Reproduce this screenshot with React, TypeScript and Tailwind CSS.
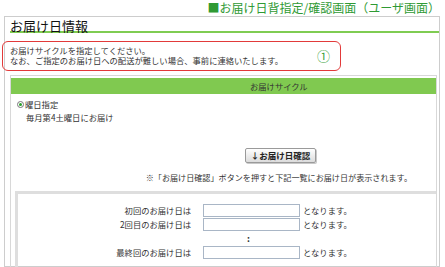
export default function App() {
  const rows = [
    { label: "初回のお届け日は" },
    { label: "2回目のお届け日は" },
  ];

  return (
    <div
      className="relative w-[445px] h-[267px] overflow-hidden bg-white text-[#333]"
      style={{ fontFamily: '"Noto Sans CJK JP", "Noto Sans", sans-serif' }}
    >
      {/* page caption */}
      <div className="h-[16px] pr-[5px] text-right text-[12px] leading-[16px] text-[#2f9a34]">
        ■お届け日背指定/確認画面（ユーザ画面）
      </div>

      {/* main panel */}
      <div className="ml-[4px] w-[436px] h-[251px] border border-[#cdcdcd] flex flex-col">
        <div className="ml-[5px] h-[16px] border-b-2 border-[#7fcc52] pt-[1px] text-[13px] leading-[15px] font-normal text-[#111]">
          お届け日情報
        </div>

        <div className="ml-[5px] mt-[12px] text-[8.3px] leading-[10px]">
          <p>お届けサイクルを指定してください。</p>
          <p>なお、ご指定のお届け日への配送が難しい場合、事前に連絡いたします。</p>
        </div>

        <div className="ml-[5px] mr-[2px] mt-[10px] border border-[#d8d8d8] px-0 pt-[2px] pb-[1px] flex flex-col">
          <div className="h-[16px] bg-[#80c950] pl-[239px] text-[8.3px] leading-[16px] text-[#333]">
            お届けサイクル
          </div>

          <div className="mt-[4px] h-[12px] pl-[6px] flex items-center gap-[1px] text-[8.3px]">
            <span className="w-[7px] h-[7px] rounded-full border border-[#777] bg-white flex items-center justify-center">
              <span className="w-[3px] h-[3px] rounded-full bg-[#2aa02a]" />
            </span>
            <span className="leading-[12px]">曜日指定</span>
          </div>
          <div className="mt-[1px] h-[12px] pl-[15px] text-[8.3px] leading-[12px]">
            毎月第4土曜日にお届け
          </div>

          <div className="mt-[17px] ml-[234px]">
            <button className="w-[71px] h-[15px] rounded-[2px] border border-[#9a9a9a] bg-gradient-to-b from-white to-[#dcdcdc] text-[8.5px] leading-[13px] font-bold text-[#222] shadow-[1px_1px_0_#c8c8c8]">
              ↓お届け日確認
            </button>
          </div>

          <div className="mt-[8px] h-[12px] pr-[24px] text-right text-[8.1px] leading-[12px]">
            ※「お届け日確認」ボタンを押すと下記一覧にお届け日が表示されます。
          </div>

          <div className="mt-[7px] ml-[4px] border-[3px] border-r-0 border-[#dedede] pt-[10px] pb-[10px] flex flex-col gap-[1px] text-[8.3px]">
            {rows.map((r) => (
              <div key={r.label} className="h-[13px] flex items-center">
                <span className="w-[173px] text-right leading-[13px]">{r.label}</span>
                <span className="ml-[12px] w-[97px] h-[13px] border border-[#a9b6c6] bg-white" />
                <span className="ml-[3px] leading-[13px]">となります。</span>
              </div>
            ))}
            <div className="h-[13px] pl-[229px] text-[9px] leading-[13px] font-bold">:</div>
            <div className="h-[13px] flex items-center">
              <span className="w-[173px] text-right leading-[13px]">最終回のお届け日は</span>
              <span className="ml-[12px] w-[97px] h-[13px] border border-[#a9b6c6] bg-white" />
              <span className="ml-[3px] leading-[13px]">となります。</span>
            </div>
          </div>
        </div>
      </div>

      {/* annotation */}
      <div className="absolute left-[2px] top-[41px] w-[339px] h-[30px] rounded-[6px] border-[1.5px] border-[#e23a3a]" />
      <div className="absolute left-[317px] top-[48px] text-[13px] leading-[16px] text-[#3aa13a]">①</div>
    </div>
  );
}
